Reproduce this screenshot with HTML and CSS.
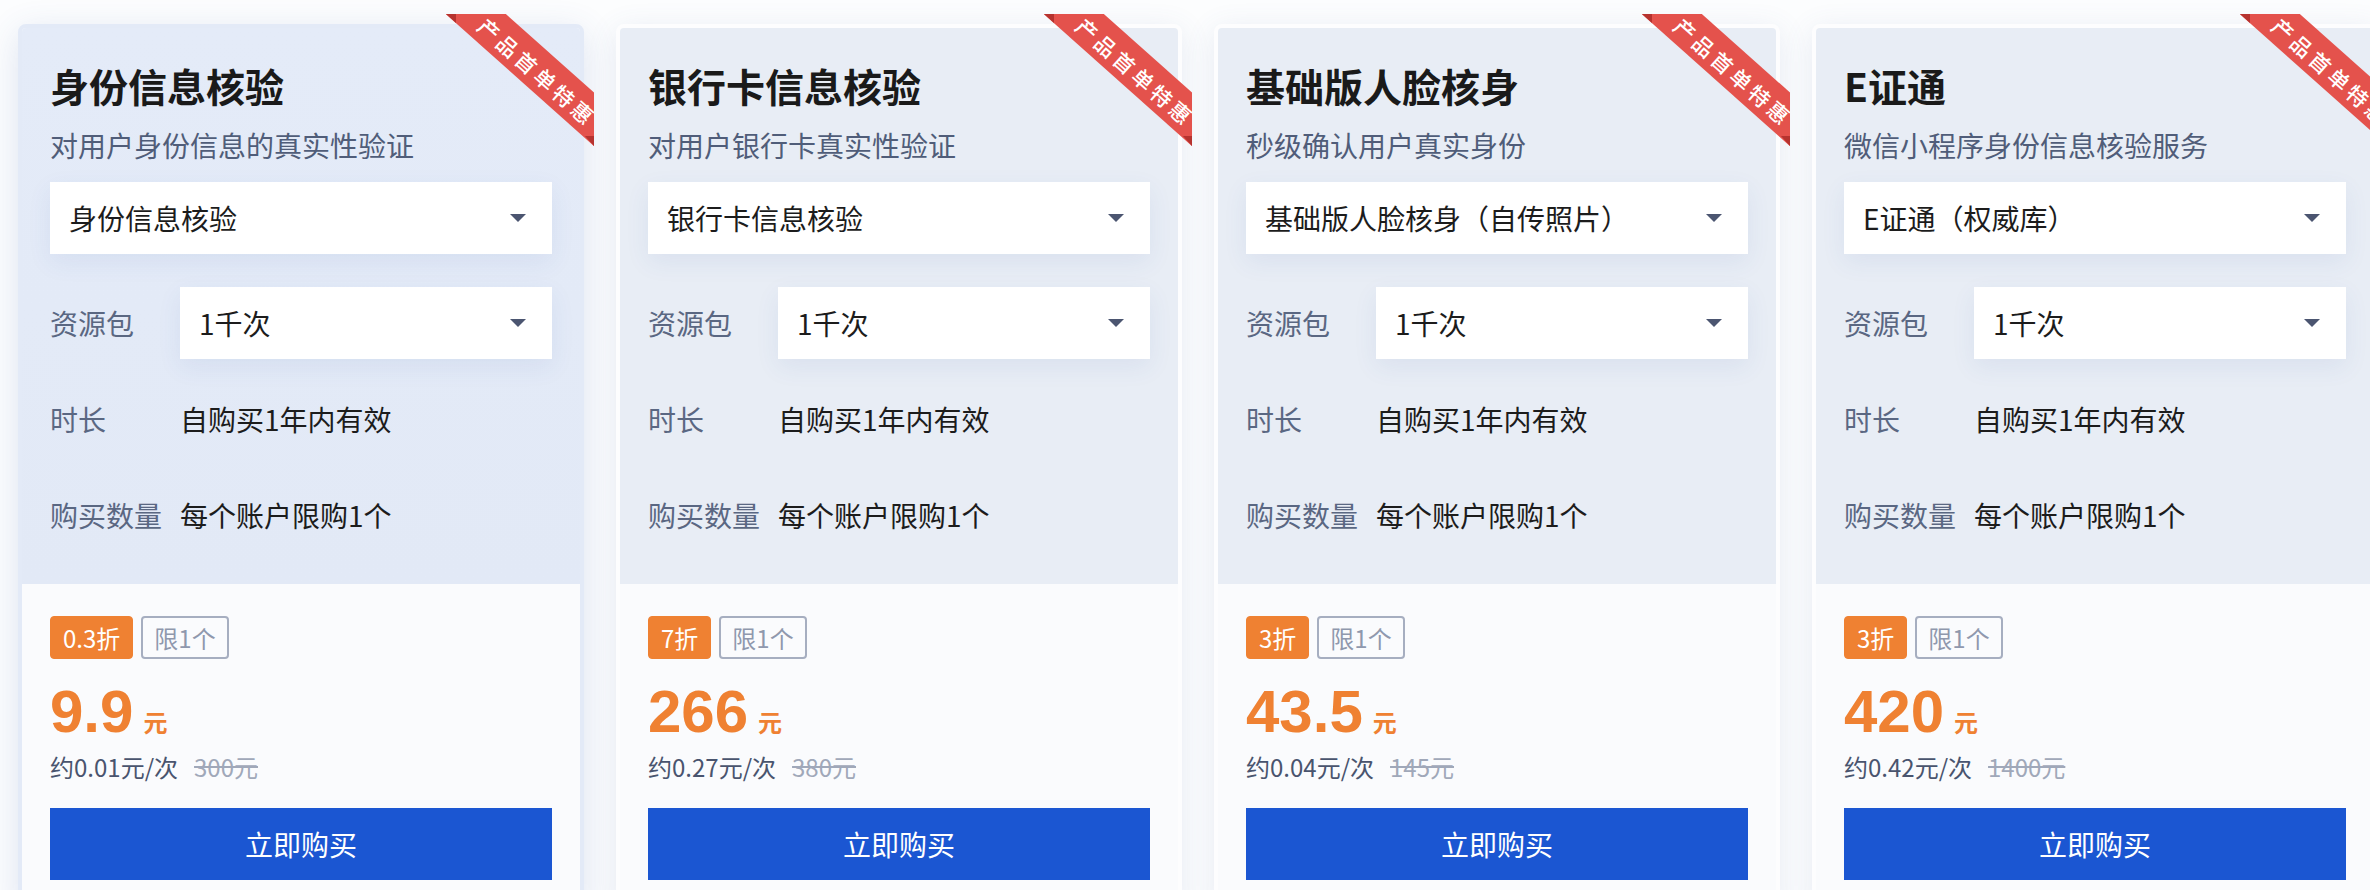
FILE: index.html
```html
<!DOCTYPE html>
<html lang="zh-CN">
<head>
<meta charset="utf-8">
<title>产品首单特惠</title>
<link rel="stylesheet" href="styles.css">
</head>
<body>
<div class="page">
  <div class="card is-active">
    <div class="ribbon"><span>产品首单特惠</span></div>
    <div class="card-top">
      <h3 class="title">身份信息核验</h3>
      <p class="desc">对用户身份信息的真实性验证</p>
      <div class="select select-main"><span>身份信息核验</span><i class="caret"></i></div>
      <div class="rows">
        <div class="row"><span class="label">资源包</span><div class="select"><span>1千次</span><i class="caret"></i></div></div>
        <div class="row"><span class="label">时长</span><span class="value">自购买1年内有效</span></div>
        <div class="row"><span class="label">购买数量</span><span class="value">每个账户限购1个</span></div>
      </div>
    </div>
    <div class="card-bottom">
      <div class="tags"><span class="tag tag-discount">0.3折</span><span class="tag tag-limit">限1个</span></div>
      <div class="price"><span class="num">9.9</span><span class="unit">元</span></div>
      <div class="unit-price">约0.01元/次<s class="orig">300元</s></div>
      <button class="buy">立即购买</button>
    </div>
  </div>

  <div class="card">
    <div class="ribbon"><span>产品首单特惠</span></div>
    <div class="card-top">
      <h3 class="title">银行卡信息核验</h3>
      <p class="desc">对用户银行卡真实性验证</p>
      <div class="select select-main"><span>银行卡信息核验</span><i class="caret"></i></div>
      <div class="rows">
        <div class="row"><span class="label">资源包</span><div class="select"><span>1千次</span><i class="caret"></i></div></div>
        <div class="row"><span class="label">时长</span><span class="value">自购买1年内有效</span></div>
        <div class="row"><span class="label">购买数量</span><span class="value">每个账户限购1个</span></div>
      </div>
    </div>
    <div class="card-bottom">
      <div class="tags"><span class="tag tag-discount">7折</span><span class="tag tag-limit">限1个</span></div>
      <div class="price"><span class="num">266</span><span class="unit">元</span></div>
      <div class="unit-price">约0.27元/次<s class="orig">380元</s></div>
      <button class="buy">立即购买</button>
    </div>
  </div>

  <div class="card">
    <div class="ribbon"><span>产品首单特惠</span></div>
    <div class="card-top">
      <h3 class="title">基础版人脸核身</h3>
      <p class="desc">秒级确认用户真实身份</p>
      <div class="select select-main"><span>基础版人脸核身（自传照片）</span><i class="caret"></i></div>
      <div class="rows">
        <div class="row"><span class="label">资源包</span><div class="select"><span>1千次</span><i class="caret"></i></div></div>
        <div class="row"><span class="label">时长</span><span class="value">自购买1年内有效</span></div>
        <div class="row"><span class="label">购买数量</span><span class="value">每个账户限购1个</span></div>
      </div>
    </div>
    <div class="card-bottom">
      <div class="tags"><span class="tag tag-discount">3折</span><span class="tag tag-limit">限1个</span></div>
      <div class="price"><span class="num">43.5</span><span class="unit">元</span></div>
      <div class="unit-price">约0.04元/次<s class="orig">145元</s></div>
      <button class="buy">立即购买</button>
    </div>
  </div>

  <div class="card">
    <div class="ribbon"><span>产品首单特惠</span></div>
    <div class="card-top">
      <h3 class="title">E证通</h3>
      <p class="desc">微信小程序身份信息核验服务</p>
      <div class="select select-main"><span>E证通（权威库）</span><i class="caret"></i></div>
      <div class="rows">
        <div class="row"><span class="label">资源包</span><div class="select"><span>1千次</span><i class="caret"></i></div></div>
        <div class="row"><span class="label">时长</span><span class="value">自购买1年内有效</span></div>
        <div class="row"><span class="label">购买数量</span><span class="value">每个账户限购1个</span></div>
      </div>
    </div>
    <div class="card-bottom">
      <div class="tags"><span class="tag tag-discount">3折</span><span class="tag tag-limit">限1个</span></div>
      <div class="price"><span class="num">420</span><span class="unit">元</span></div>
      <div class="unit-price">约0.42元/次<s class="orig">1400元</s></div>
      <button class="buy">立即购买</button>
    </div>
  </div>
</div>
</body>
</html>
```

FILE: styles.css
```css
html, body {
  margin: 0;
  padding: 0;
  overflow: hidden;
  background: #fcfdfe;
}

body {
  font-family: "Noto Sans CJK SC", "Noto Sans", sans-serif;
  color: #1c1c1c;
}

.page {
  display: flex;
  gap: 32px;
  padding: 24px 0 0 18px;
  width: 2500px;
}

.card {
  position: relative;
  flex: 0 0 566px;
  box-sizing: border-box;
  border: 4px solid #fdfdfe;
  border-radius: 8px;
  background: #fafbfd;
  box-shadow: 0 6px 30px rgba(70, 100, 160, 0.12);
}

.card-top {
  padding: 30px 28px 33px;
  background: #e8edf5;
  border-radius: 4px 4px 0 0;
}

.card.is-active {
  border-color: #e3eaf7;
  box-shadow: 0 8px 34px rgba(60, 95, 165, 0.16);
}

.card.is-active .card-top {
  background: linear-gradient(180deg, #e4ebf8 0%, #e2e9f6 100%);
}

.ribbon {
  position: absolute;
  top: -14px;
  right: -14px;
  width: 148px;
  height: 132px;
  overflow: hidden;
  z-index: 2;
}

.ribbon span {
  position: absolute;
  left: -33px;
  top: 31px;
  box-sizing: border-box;
  width: 240px;
  height: 40px;
  padding: 4px 0 0 12px;
  line-height: 36px;
  background: #e4524c;
  color: #fff;
  font-size: 21px;
  font-weight: 500;
  letter-spacing: 4px;
  text-indent: 4px;
  text-align: center;
  white-space: nowrap;
  transform: rotate(41.7deg);
}

.ribbon::before,
.ribbon::after {
  content: "";
  position: absolute;
  background: #b6332f;
  z-index: 3;
}

.ribbon::before {
  left: 0;
  top: 0;
  width: 10px;
  height: 9px;
  clip-path: polygon(0 0, 100% 0, 100% 100%);
}

.ribbon::after {
  right: 0;
  bottom: 0;
  width: 9px;
  height: 10px;
  clip-path: polygon(0 0, 100% 0, 100% 100%);
}

.title {
  margin: 0;
  font-size: 39px;
  line-height: 55px;
  font-weight: 700;
  color: #1a1a1a;
}

.desc {
  margin: 12px 0 0;
  font-size: 28px;
  line-height: 40px;
  color: #505d79;
}

.select {
  display: flex;
  align-items: center;
  justify-content: space-between;
  box-sizing: border-box;
  height: 72px;
  padding: 0 26px 0 19px;
  background: #fff;
  font-size: 28px;
  color: #1c1c1c;
  box-shadow: 0 8px 24px rgba(55, 95, 165, 0.08);
}

.select-main {
  margin-top: 17px;
}

.caret {
  width: 0;
  height: 0;
  border-left: 8px solid transparent;
  border-right: 8px solid transparent;
  border-top: 8px solid #4b5570;
}

.rows {
  margin-top: 33px;
  display: flex;
  flex-direction: column;
  gap: 24px;
}

.row {
  display: flex;
  align-items: center;
  height: 72px;
}

.row .select {
  flex: 1;
}

.label {
  flex: 0 0 130px;
  font-size: 28px;
  color: #5a6782;
}

.value {
  font-size: 28px;
  color: #1c1c1c;
}

.card-bottom {
  padding: 32px 28px 28px;
}

.tags {
  display: flex;
  gap: 8px;
}

.tag {
  box-sizing: border-box;
  height: 43px;
  line-height: 41px;
  padding: 0 12px;
  font-size: 24px;
  border-radius: 4px;
}

.tag-discount {
  background: #ef8132;
  color: #fff;
  border: 1px solid #ef8132;
}

.tag-limit {
  border: 2px solid #a6aec0;
  color: #8f98ad;
  line-height: 39px;
  padding: 0 11px;
}

.price {
  margin-top: 23px;
  display: flex;
  align-items: baseline;
  height: 60px;
  color: #ef8132;
}

.price .num {
  font-family: "Liberation Sans", Arial, sans-serif;
  font-size: 60px;
  line-height: 60px;
  font-weight: 700;
}

.price .unit {
  margin-left: 10px;
  font-size: 24px;
  font-weight: 700;
}

.unit-price {
  margin-top: 8px;
  font-size: 24px;
  line-height: 34px;
  color: #49546e;
}

.orig {
  margin-left: 16px;
  color: #a0a8b9;
}

.buy {
  display: block;
  width: 100%;
  height: 72px;
  margin-top: 24px;
  border: none;
  background: #1b56d2;
  color: #fff;
  font-family: inherit;
  font-size: 28px;
  cursor: pointer;
}
```
